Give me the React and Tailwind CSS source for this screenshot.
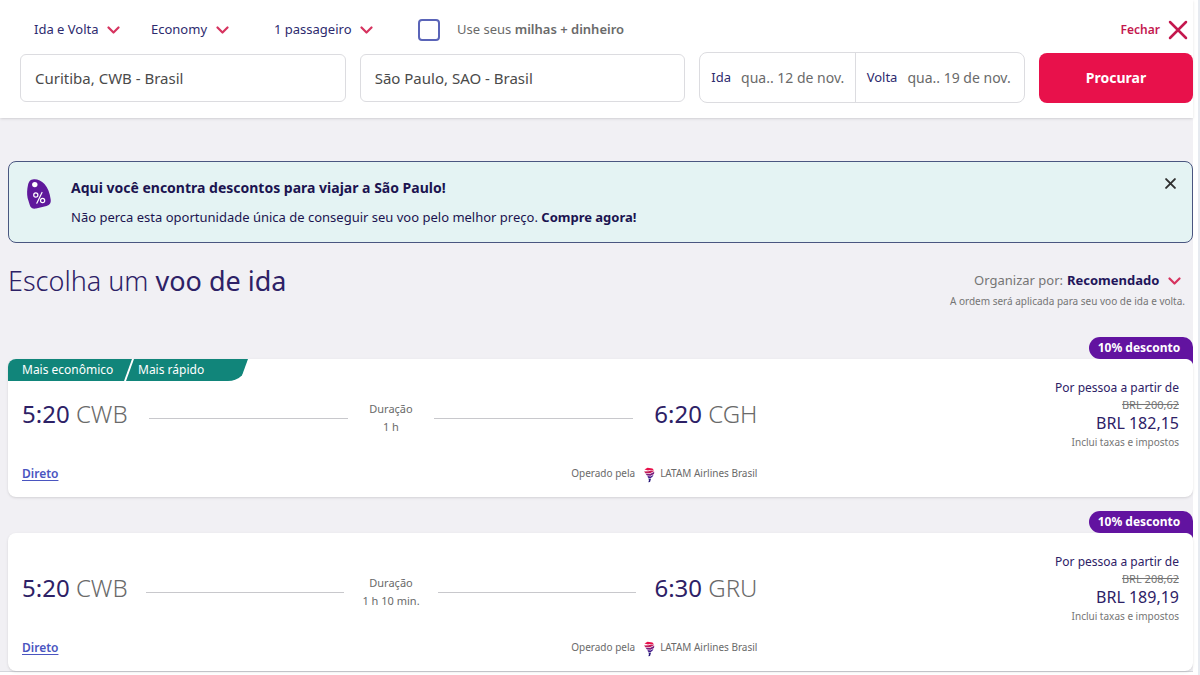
import React, { useState } from 'react';

const flights = [
  {
    id: 1,
    departure: '5:20',
    from: 'CWB',
    arrival: '6:20',
    to: 'CGH',
    duration: '1 h',
    oldPrice: 'BRL 200,62',
    price: 'BRL 182,15',
    tags: ['Mais econômico', 'Mais rápido'],
  },
  {
    id: 2,
    departure: '5:20',
    from: 'CWB',
    arrival: '6:30',
    to: 'GRU',
    duration: '1 h 10 min.',
    oldPrice: 'BRL 208,62',
    price: 'BRL 189,19',
    tags: [],
  },
];

const Chevron = () => (
  <svg viewBox="0 0 13 8" className="h-2 w-[13px] shrink-0" fill="none" stroke="#d6335f" strokeWidth="2.200" strokeLinecap="round" strokeLinejoin="round" aria-hidden="true">
    <path d="M1.500 1.500 L6.500 6.500 L11.500 1.500" />
  </svg>
);

const Cross = ({ className }) => (
  <svg viewBox="0 0 20 20" className={className} fill="none" stroke="currentColor" strokeLinecap="round" aria-hidden="true">
    <path d="M2 2 L18 18 M18 2 L2 18" />
  </svg>
);

const Picker = ({ label, value, className = '' }) => (
  <div className={`flex items-center gap-2 ${className}`}>
    <select aria-label={label} className="appearance-none bg-transparent text-[13px] text-[#2d2a6e] outline-none">
      <option>{value}</option>
    </select>
    <Chevron />
  </div>
);

const DateField = ({ id, label, value, className }) => (
  <div className={`flex min-w-0 items-center gap-[10px] pl-[11px] ${className}`}>
    <label htmlFor={id} className="text-[13px] text-[#2d2a6e]">{label}</label>
    <input id={id} defaultValue={value} className="w-full min-w-0 text-sm text-[#6a6a6a] outline-none" />
  </div>
);

const TagIcon = () => (
  <svg viewBox="0 0 26 32" className="h-8 w-[26px] shrink-0" aria-hidden="true">
    <path d="M8 1.200 C4 1.300 2.600 4 2 7 C1 11 0.800 16 1.600 20 L3.600 26.500 C4.500 30 7 31.200 10 30.600 L20.500 28 C24 27 25.300 24.500 24.600 21 C23.800 15 22 10 18.500 6 C15.500 2.800 11.500 1 8 1.200 Z" fill="#5f189b" />
    <circle cx="8.800" cy="6.600" r="2.700" fill="#fff" />
    <g fill="none" stroke="#fff" strokeWidth="1.200" strokeLinecap="round">
      <circle cx="9.800" cy="17" r="2.100" />
      <circle cx="16.600" cy="22.500" r="2.100" />
      <path d="M16 14.500 L10.800 25.200" />
    </g>
  </svg>
);

const LatamIcon = () => (
  <svg viewBox="0 0 12 16" className="mt-[3px] mr-[5px] ml-2 h-4 w-3 shrink-0" aria-hidden="true">
    <path d="M1.500 2.400 L4.500 0.800 L9.500 1.600 L11 3.400 L7 3 L5 3.400 Z" fill="#e8114b" />
    <path d="M1 4.400 L5.500 4.200 L8 3.400 L11.200 4 L7 6.200 L2.500 6.200 Z" fill="#c41c58" />
    <path d="M2.500 6.800 L7 6.900 L11.300 4.800 L11 7 L7.500 8.800 L4 8.400 Z" fill="#7a1c7c" />
    <path d="M4.500 9.100 L7.500 9.400 L10.600 7.800 L9.500 9.800 L7.500 11.200 L5 10.800 Z" fill="#43198a" />
    <path d="M5.200 11.400 L8 11.800 L7 15 L5.400 15.200 L6 13 Z" fill="#2a1a7a" />
  </svg>
);

const FlightCard = ({ flight }) => (
  <li className="flex flex-col">
    <span className="relative flex h-[22px] w-[104px] items-center justify-center self-end rounded-l-[11px] rounded-tr-[10px] bg-[#6213a0] pr-1 text-xs font-bold text-white">
      10% desconto
      <svg viewBox="0 0 8 5" className="absolute right-0 top-full h-[5px] w-2" aria-hidden="true">
        <path d="M0 0 H8 V5 C7 2 4 0 0 0 Z" fill="#6213a0" />
      </svg>
    </span>
    <article className="flex justify-between rounded-lg bg-white pr-[14px] pb-[14px] shadow-sm">
      <div className="w-[64%]">
        <div className="h-[22px]">
          {flight.tags.length > 0 && (
            <div className="flex h-full text-xs leading-[22px] text-white">
              <span className="w-[124px] rounded-tl-lg bg-[#11857a] pl-[14px] [clip-path:polygon(0_0,100%_0,calc(100%-8px)_100%,0_100%)]">{flight.tags[0]}</span>
              <span className="-ml-[6px] w-[122px] rounded-br-[20px] bg-[#11857a] pl-3 [clip-path:polygon(8px_0,100%_0,calc(100%-8px)_100%,0_100%)]">{flight.tags[1]}</span>
            </div>
          )}
        </div>
        <div className="mt-[11px] flex items-center justify-between pl-[14px]">
          <p className="text-2xl leading-9 font-light text-[#6a6a6a]">
            <strong className="font-normal text-[#2d2166]">{flight.departure}</strong> {flight.from}
          </p>
          <hr className="mt-2 w-[27%] border-[#c8c8cc]" />
          <p className="mt-2 text-center text-[11px] leading-[18px] text-[#6a6a6a]">Duração<br />{flight.duration}</p>
          <hr className="mt-2 w-[27%] border-[#c8c8cc]" />
          <p className="text-2xl leading-9 font-light text-[#6a6a6a]">
            <strong className="font-normal text-[#2d2166]">{flight.arrival}</strong> {flight.to}
          </p>
        </div>
        <div className="mt-7 flex items-center justify-between pl-[14px]">
          <a href="#direto" className="text-xs font-semibold text-[#4a55c0] underline underline-offset-2">Direto</a>
          <p className="flex items-center text-[10px] text-[#6a6a6a]">
            Operado pela <LatamIcon /> LATAM Airlines Brasil
          </p>
        </div>
      </div>
      <div className="pt-5 text-right">
        <p className="text-xs leading-[17px] text-[#2d2166]">Por pessoa a partir de</p>
        <p className="text-[11px] leading-[17px] text-[#757575]"><s>{flight.oldPrice}</s></p>
        <p className="text-base leading-5 text-[#2d2166]">{flight.price}</p>
        <p className="text-[10px] leading-[18px] text-[#757575]">Inclui taxas e impostos</p>
      </div>
    </article>
  </li>
);

const App = () => {
  const [showBanner, setShowBanner] = useState(true);

  return (
    <div className="min-h-screen border-r-2 border-[#e6eaf0] bg-white pr-[5px] font-['Noto_Sans',sans-serif]">
      <header className="relative bg-white pb-[15px] pl-5 shadow">
        <div className="flex h-[52px] items-center pt-2 pl-[14px]">
          <Picker label="Tipo de viagem" value="Ida e Volta" />
          <Picker label="Cabine" value="Economy" className="ml-[31px]" />
          <Picker label="Passageiros" value="1 passageiro" className="ml-[45px]" />
          <label className="ml-[45px] flex items-center gap-[17px] text-[13px] text-[#6a6a6a]">
            <input type="checkbox" className="size-[22px] appearance-none rounded-sm border-2 border-[#5a64b8] checked:bg-[#5a64b8]" />
            <span>Use seus <b className="font-semibold">milhas + dinheiro</b></span>
          </label>
          <button className="mr-[5px] ml-auto flex items-center gap-2 text-xs font-semibold text-[#c4184e]">
            Fechar <Cross className="size-5 stroke-[2.5]" />
          </button>
        </div>
        <div className="grid grid-cols-[1fr_1fr_1fr_154px] items-center gap-[14px]">
          <input aria-label="Origem" defaultValue="Curitiba, CWB - Brasil" className="h-12 min-w-0 rounded-md border border-[#dcdce0] px-[14px] text-[15px] text-[#4a4a4a]" />
          <input aria-label="Destino" defaultValue="São Paulo, SAO - Brasil" className="h-12 min-w-0 rounded-md border border-[#dcdce0] px-[14px] text-[15px] text-[#4a4a4a]" />
          <div className="flex h-[51px] min-w-0 rounded-lg border border-[#dcdce0]">
            <DateField id="ida" label="Ida" value="qua.. 12 de nov." className="w-[48%] border-r border-[#dcdce0]" />
            <DateField id="volta" label="Volta" value="qua.. 19 de nov." className="w-[52%]" />
          </div>
          <button className="h-[50px] rounded-lg bg-[#e8114b] text-sm font-bold text-white">Procurar</button>
        </div>
      </header>

      <main className="border-b border-[#d4d6dc] bg-[#f1f0f4] pt-[43px] pl-2">
        {showBanner && (
          <section className="flex h-[82px] items-start rounded-lg border border-[#4a5680] bg-[#e4f3f3] pt-[14px] pr-4 pl-[17px]">
            <div className="pt-[2px]"><TagIcon /></div>
            <div className="ml-[19px] text-[#1b1450]">
              <h2 className="text-sm leading-6 font-bold">Aqui você encontra descontos para viajar a São Paulo!</h2>
              <p className="mt-[5px] text-[13px] leading-6">
                Não perca esta oportunidade única de conseguir seu voo pelo melhor preço. <b>Compre agora!</b>
              </p>
            </div>
            <button aria-label="Fechar aviso" onClick={() => setShowBanner(false)} className="mt-[2px] ml-auto text-[#303030]">
              <Cross className="size-[11px] stroke-[3.5]" />
            </button>
          </section>
        )}

        <div className="mt-5 flex h-[74px] items-start justify-between">
          <h1 className="text-[27px] leading-9 font-light text-[#2d2166]">
            Escolha um <span className="font-normal">voo de ida</span>
          </h1>
          <div className="flex flex-col items-end pt-2 pr-2">
            <div className="flex items-center gap-1 pr-1 text-[13px]">
              <label htmlFor="ordem" className="text-[#757575]">Organizar por:</label>
              <select id="ordem" className="mr-1 appearance-none bg-transparent font-bold text-[#22155a] outline-none">
                <option>Recomendado</option>
              </select>
              <Chevron />
            </div>
            <p className="text-[10px] leading-5 text-[#757575]">A ordem será aplicada para seu voo de ida e volta.</p>
          </div>
        </div>

        <ul className="flex flex-col gap-[14px]">
          {flights.map(flight => <FlightCard key={flight.id} flight={flight} />)}
        </ul>
      </main>
    </div>
  );
};

export default App;
